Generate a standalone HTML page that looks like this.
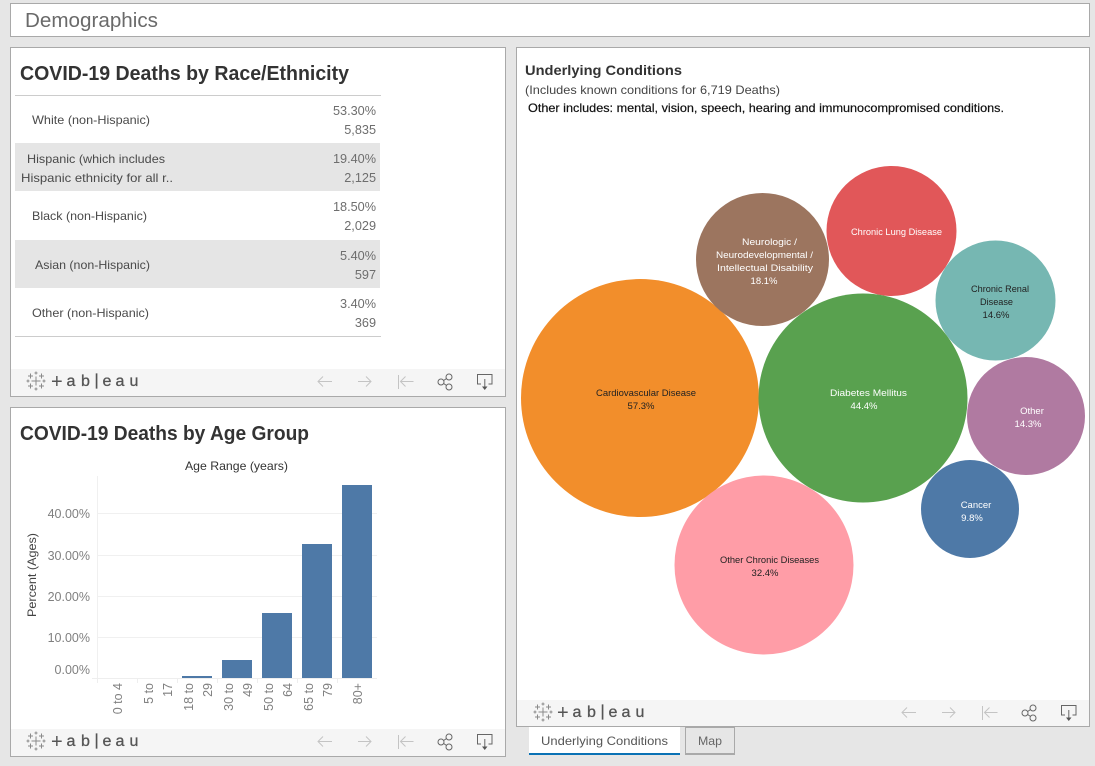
<!DOCTYPE html>
<html lang="en">
<head>
<meta charset="utf-8">
<title>Demographics</title>
<style>
html,body{margin:0;padding:0;background:#e6e6e6;width:1095px;height:766px;overflow:hidden}
svg{display:block;position:absolute;left:0;top:0}
text{font-family:"Liberation Sans",sans-serif}
.t{font-size:12px;fill:#4a4a4a}
.n{font-size:12.700px;fill:#6e6e6e;text-anchor:end}
.h{font-size:20px;font-weight:bold;fill:#333}
.b{font-size:9.500px}
.w{fill:#fff}
.k{fill:#222}
.ax{font-size:12.500px;fill:#808080}
.tb{font-size:16px;fill:#555;stroke:#555;stroke-width:.3px}
.pl{font-size:20px;fill:#555}
</style>
</head>
<body>
<svg width="1095" height="766" viewBox="0 0 1095 766" xmlns="http://www.w3.org/2000/svg">
<defs>
<g id="logo" stroke="#8a8a8a" stroke-width="1" fill="none">
<path d="M36 376.500v9M31.500 381h9"/>
<path d="M30.500 373.500v5M28 376h5M41.500 373.500v5M39 376h5M30.500 383.500v5M28 386h5M41.500 383.500v5M39 386h5"/>
<path d="M36 371.500v3M34.500 373h3M36 387.500v3M34.500 389h3M28 379.500v3M26.500 381h3M44 379.500v3M42.500 381h3"/>
</g>
<g id="tools" fill="none" stroke="#c4c4c4" stroke-width="1">
<path d="M318 381.500h14M323 376.500l-5 5 5 5"/>
<path d="M358 381.500h13M366 376.500l5 5-5 5"/>
<path d="M398.500 375v14M400.500 381.500h13M405.500 376.500l-5 5 5 5"/>
<g stroke="#666">
<circle cx="441" cy="382" r="3"/><circle cx="449" cy="377" r="3"/><circle cx="449" cy="387" r="3"/>
<path d="M443.600 380.500l3-2M443.600 383.500l3 2"/>
<path d="M481 384h-3.500v-9.500h14.500v9.500h-3.500"/>
<path d="M484.800 379v9"/>
</g>
<path d="M482 386.500h5.500l-2.750 3.500z" fill="#555" stroke="none"/>
</g>
</defs>

<rect width="1095" height="766" fill="#e6e6e6"/>

<!-- Header -->
<rect x="10.500" y="3.500" width="1079" height="33" fill="#fff" stroke="#a9a9a9"/>
<text x="25" y="27" font-size="20" fill="#6a6a6a" textLength="133" lengthAdjust="spacingAndGlyphs">Demographics</text>

<!-- Panel 1 -->
<rect x="10.500" y="47.500" width="495" height="349" fill="#fff" stroke="#a9a9a9"/>
<rect x="11" y="369" width="494" height="27" fill="#f5f5f5"/>
<text class="h" x="20" y="80" textLength="329" lengthAdjust="spacingAndGlyphs">COVID-19 Deaths by Race/Ethnicity</text>
<rect x="15" y="143" width="365" height="48" fill="#e5e5e5"/>
<rect x="15" y="240" width="365" height="48" fill="#e5e5e5"/>
<path d="M15 95.500h366M15 336.500h366" stroke="#ccc"/>

<text class="t" x="32" y="124" textLength="118" lengthAdjust="spacingAndGlyphs">White (non-Hispanic)</text>
<text class="t" x="27" y="163" textLength="138" lengthAdjust="spacingAndGlyphs">Hispanic (which includes</text>
<text class="t" x="21" y="182" textLength="152" lengthAdjust="spacingAndGlyphs">Hispanic ethnicity for all r..</text>
<text class="t" x="32" y="220" textLength="115" lengthAdjust="spacingAndGlyphs">Black (non-Hispanic)</text>
<text class="t" x="35" y="269" textLength="115" lengthAdjust="spacingAndGlyphs">Asian (non-Hispanic)</text>
<text class="t" x="32" y="317" textLength="117" lengthAdjust="spacingAndGlyphs">Other (non-Hispanic)</text>

<text class="n" x="376" y="115">53.30%</text><text class="n" x="376" y="134">5,835</text>
<text class="n" x="376" y="163">19.40%</text><text class="n" x="376" y="182">2,125</text>
<text class="n" x="376" y="211">18.50%</text><text class="n" x="376" y="230">2,029</text>
<text class="n" x="376" y="260">5.40%</text><text class="n" x="376" y="279">597</text>
<text class="n" x="376" y="308">3.40%</text><text class="n" x="376" y="327">369</text>

<use href="#logo"/>
<text class="pl" x="51" y="388">+</text><text class="tb" x="66.500" y="386">a</text><text class="tb" x="81" y="386">b</text><text class="tb" x="94.500" y="385">|</text><text class="tb" x="102.500" y="386">e</text><text class="tb" x="115.500" y="386">a</text><text class="tb" x="129.500" y="386">u</text>
<use href="#tools"/>

<!-- Panel 2 -->
<rect x="10.500" y="407.500" width="495" height="349" fill="#fff" stroke="#a9a9a9"/>
<rect x="11" y="729" width="494" height="27" fill="#f5f5f5"/>
<text class="h" x="20" y="440" textLength="289" lengthAdjust="spacingAndGlyphs">COVID-19 Deaths by Age Group</text>
<text x="185" y="470" font-size="12" fill="#333" textLength="103" lengthAdjust="spacingAndGlyphs">Age Range (years)</text>

<path d="M97.500 476v202" stroke="#f0f0f0"/>
<path d="M97 513.500h280M97 555.500h280M97 596.500h280M97 637.500h280" stroke="#f0f0f0"/>
<path d="M92 678.500h285" stroke="#eee"/>
<path d="M97.500 678v5M137.500 678v5M177.500 678v5M217.500 678v5M257.500 678v5M297.500 678v5M337.500 678v5" stroke="#eee"/>

<g fill="#4e79a7">
<rect x="182" y="676" width="30" height="2"/>
<rect x="222" y="660" width="30" height="18"/>
<rect x="262" y="613" width="30" height="65"/>
<rect x="302" y="544" width="30" height="134"/>
<rect x="342" y="485" width="30" height="193"/>
</g>

<g class="ax" text-anchor="end">
<text x="90" y="518">40.00%</text>
<text x="90" y="560">30.00%</text>
<text x="90" y="601">20.00%</text>
<text x="90" y="642">10.00%</text>
<text x="90" y="674">0.00%</text>
</g>
<text transform="translate(36,617) rotate(-90)" font-size="12" fill="#444" textLength="84" lengthAdjust="spacingAndGlyphs">Percent (Ages)</text>

<g class="ax" text-anchor="end">
<text transform="translate(122,683) rotate(-90)">0 to 4</text>
<text transform="translate(153,683) rotate(-90)">5 to</text>
<text transform="translate(172,683) rotate(-90)">17</text>
<text transform="translate(193,683) rotate(-90)">18 to</text>
<text transform="translate(212,683) rotate(-90)">29</text>
<text transform="translate(233,683) rotate(-90)">30 to</text>
<text transform="translate(252,683) rotate(-90)">49</text>
<text transform="translate(273,683) rotate(-90)">50 to</text>
<text transform="translate(292,683) rotate(-90)">64</text>
<text transform="translate(313,683) rotate(-90)">65 to</text>
<text transform="translate(332,683) rotate(-90)">79</text>
<text transform="translate(362,683) rotate(-90)">80+</text>
</g>

<use href="#logo" y="360"/>
<text class="pl" x="51" y="748">+</text><text class="tb" x="66.500" y="746">a</text><text class="tb" x="81" y="746">b</text><text class="tb" x="94.500" y="745">|</text><text class="tb" x="102.500" y="746">e</text><text class="tb" x="115.500" y="746">a</text><text class="tb" x="129.500" y="746">u</text>
<use href="#tools" y="360"/>

<!-- Panel 3 -->
<rect x="516.500" y="47.500" width="573" height="679" fill="#fff" stroke="#a9a9a9"/>
<rect x="517" y="700" width="572" height="26" fill="#f5f5f5"/>
<text x="525" y="75" font-size="14" font-weight="bold" fill="#333" textLength="157" lengthAdjust="spacingAndGlyphs">Underlying Conditions</text>
<text x="525" y="94" font-size="12" fill="#444" textLength="255" lengthAdjust="spacingAndGlyphs">(Includes known conditions for 6,719 Deaths)</text>
<text x="528" y="112" font-size="12" fill="#111" stroke="#111" stroke-width="0.200" textLength="476" lengthAdjust="spacingAndGlyphs">Other includes: mental, vision, speech, hearing and immunocompromised conditions.</text>

<circle cx="640" cy="398" r="119" fill="#f28e2b"/>
<circle cx="764" cy="565" r="89.500" fill="#ff9da7"/>
<circle cx="762.500" cy="259.500" r="66.500" fill="#9c755f"/>
<circle cx="891.500" cy="231" r="65" fill="#e15759"/>
<circle cx="995.500" cy="300.500" r="60" fill="#76b7b2"/>
<circle cx="1026" cy="416" r="59" fill="#b07aa1"/>
<circle cx="970" cy="509" r="49" fill="#4e79a7"/>
<circle cx="863" cy="398" r="104.500" fill="#59a14f"/>

<text class="b k" x="596" y="396" textLength="100" lengthAdjust="spacingAndGlyphs">Cardiovascular Disease</text>
<text class="b k" x="641" y="409" text-anchor="middle">57.3%</text>
<text class="b w" x="830" y="396" textLength="77" lengthAdjust="spacingAndGlyphs">Diabetes Mellitus</text>
<text class="b w" x="864" y="409" text-anchor="middle">44.4%</text>
<text class="b w" x="742" y="245" textLength="55" lengthAdjust="spacingAndGlyphs">Neurologic /</text>
<text class="b w" x="716" y="258" textLength="97" lengthAdjust="spacingAndGlyphs">Neurodevelopmental /</text>
<text class="b w" x="717" y="271" textLength="96" lengthAdjust="spacingAndGlyphs">Intellectual  Disability</text>
<text class="b w" x="764" y="284" text-anchor="middle">18.1%</text>
<text class="b w" x="851" y="235" textLength="91" lengthAdjust="spacingAndGlyphs">Chronic Lung Disease</text>
<text class="b k" x="971" y="292" textLength="58" lengthAdjust="spacingAndGlyphs">Chronic Renal</text>
<text class="b k" x="980" y="305" textLength="33" lengthAdjust="spacingAndGlyphs">Disease</text>
<text class="b k" x="996" y="318" text-anchor="middle">14.6%</text>
<text class="b w" x="1032" y="414" text-anchor="middle">Other</text>
<text class="b w" x="1028" y="427" text-anchor="middle">14.3%</text>
<text class="b w" x="976" y="508" text-anchor="middle">Cancer</text>
<text class="b w" x="972" y="521" text-anchor="middle">9.8%</text>
<text class="b k" x="720" y="563" textLength="99" lengthAdjust="spacingAndGlyphs">Other Chronic Diseases</text>
<text class="b k" x="765" y="576" text-anchor="middle">32.4%</text>

<use href="#logo" x="507" y="331"/>
<text class="pl" x="557" y="719">+</text><text class="tb" x="572.500" y="717">a</text><text class="tb" x="587" y="717">b</text><text class="tb" x="600.500" y="716">|</text><text class="tb" x="608.500" y="717">e</text><text class="tb" x="621.500" y="717">a</text><text class="tb" x="635.500" y="717">u</text>
<use href="#tools" x="584" y="331"/>

<!-- Tabs -->
<rect x="529" y="727" width="151" height="28" fill="#fff"/>
<rect x="529" y="753" width="151" height="2" fill="#0b72b5"/>
<rect x="685.500" y="727.500" width="49" height="26.500" fill="#e6e6e6" stroke="#a9a9a9"/>
<rect x="685" y="753" width="50" height="2" fill="#a9a9a9"/>
<text x="541" y="745" font-size="12" fill="#555" textLength="127" lengthAdjust="spacingAndGlyphs">Underlying Conditions</text>
<text x="698" y="745" font-size="12" fill="#666" textLength="24" lengthAdjust="spacingAndGlyphs">Map</text>
</svg>
</body>
</html>
